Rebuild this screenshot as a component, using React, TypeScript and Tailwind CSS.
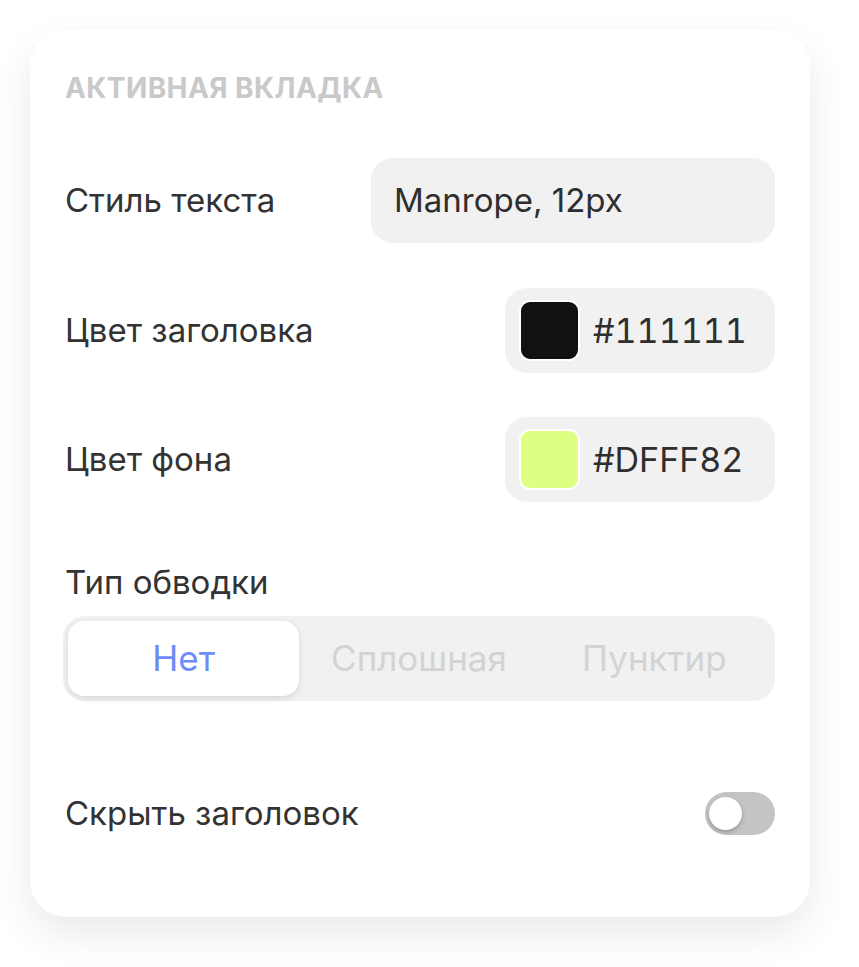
import React, { useState } from 'react';

const font = { fontFamily: 'Inter, "Noto Sans", sans-serif' };

const ColorField: React.FC<{ color: string; value: string }> = ({ color, value }) => (
  <div className="flex items-center h-[85px] w-[270px] rounded-[22px] bg-[#f1f1f1] pl-[14px] gap-[13px]">
    <div className="w-[61px] h-[61px] rounded-[11px] border-2 border-white shrink-0" style={{ backgroundColor: color }} />
    <span className="text-[34px] text-[#2e2e2e] tabular-nums leading-none">{value}</span>
  </div>
);

const App: React.FC = () => {
  const [tab, setTab] = useState('Нет');
  const [hidden, setHidden] = useState(false);
  const tabs = ['Нет', 'Сплошная', 'Пунктир'];

  return (
    <div className="min-h-screen bg-white pt-[30px] pl-[30px]" style={font}>
      <div className="w-[780px] h-[887px] bg-white rounded-[36px] shadow-[0_16px_40px_rgba(0,0,0,0.09)] px-[35px] pt-[44px]">
        <h2 className="text-[28px] font-bold text-[#c9c9c9] leading-none tracking-[0.4px]">АКТИВНАЯ ВКЛАДКА</h2>

        <div className="mt-[56px] flex items-center justify-between">
          <span className="text-[33px] text-[#333] leading-none">Стиль текста</span>
          <div className="flex items-center h-[85px] w-[404px] rounded-[22px] bg-[#f1f1f1] px-[23px]">
            <span className="text-[33px] text-[#2e2e2e] leading-none">Manrope, 12px</span>
          </div>
        </div>

        <div className="mt-[45px] flex items-center justify-between">
          <span className="text-[33px] text-[#333] leading-none">Цвет заголовка</span>
          <ColorField color="#111111" value="#111111" />
        </div>

        <div className="mt-[44px] flex items-center justify-between">
          <span className="text-[33px] text-[#333] leading-none">Цвет фона</span>
          <ColorField color="#DFFF82" value="#DFFF82" />
        </div>

        <div className="mt-[64px] text-[33px] text-[#333] leading-none">Тип обводки</div>

        <div className="mt-[17px] ml-[-2px] h-[85px] rounded-[22px] bg-[#f1f1f1] p-[5px] grid grid-cols-3 gap-[4px]">
          {tabs.map((t) => (
            <button
              key={t}
              onClick={() => setTab(t)}
              className={
                tab === t
                  ? 'rounded-[16px] bg-white shadow-[0_2px_6px_rgba(0,0,0,0.12)] text-[35px] text-[#6e8bfa]'
                  : 'rounded-[16px] text-[35px] text-[#d3d3d3]'
              }
            >
              {t}
            </button>
          ))}
        </div>

        <div className="mt-[91px] h-[43px] flex items-center justify-between">
          <span className="text-[33px] text-[#333] leading-none">Скрыть заголовок</span>
          <button
            onClick={() => setHidden(!hidden)}
            className={`relative w-[70px] h-[43px] rounded-full ${hidden ? 'bg-[#6e8bfa]' : 'bg-[#c4c4c4]'}`}
          >
            <span
              className={`absolute top-[5px] w-[33px] h-[33px] rounded-full bg-white shadow-[0_2px_4px_rgba(0,0,0,0.25)] ${hidden ? 'left-[32px]' : 'left-[4px]'}`}
            />
          </button>
        </div>
      </div>
    </div>
  );
};

export default App;
